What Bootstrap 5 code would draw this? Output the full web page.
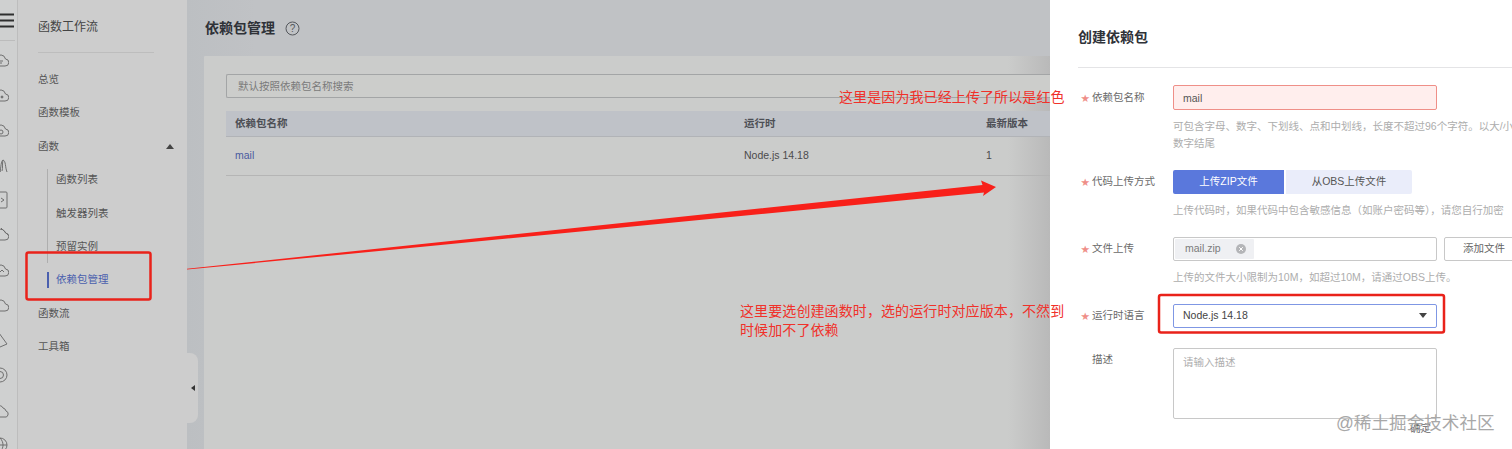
<!DOCTYPE html>
<html lang="zh">
<head>
<meta charset="utf-8">
<title>依赖包管理</title>
<link href="https://cdn.jsdelivr.net/npm/bootstrap@5.3.0/dist/css/bootstrap.min.css" rel="stylesheet">
<style>
html,body{height:449px;overflow:hidden;}
body{font-family:"Liberation Sans","Noto Sans CJK SC",sans-serif;font-size:10.5px;color:#555;background:#cdcdcd;}
.stage{width:1512px;height:449px;overflow:hidden;}
.rail{width:18px;flex:none;background:#cfd0d0;border-right:1px solid #bdbdbd;overflow:hidden;}
.rail-top{height:41px;border-bottom:1px solid #bcbcbc;margin-right:2px;padding-top:12px;}
.rail-icons{gap:15px;padding-top:9px;margin-left:-7px;}
.rail-icons svg{flex:none;display:block;}
.side{width:169px;flex:none;background:#cdcdcd;padding:0 0 0 20px;}
.side-title{height:53px;line-height:54px;width:116px;border-bottom:1px solid #bdbdbd;font-size:12px;color:#444;margin-bottom:10px;}
.side-item{height:33.4px;line-height:33.4px;color:#555;padding:0;width:140px;}
.side-tri{width:0;height:0;border-left:4px solid transparent;border-right:4px solid transparent;border-bottom:5px solid #444;margin-right:4px;}
.side-sub{margin-left:9px;padding-left:9px;position:relative;}
.side-sub::before{content:"";position:absolute;left:0;top:6px;height:94px;width:1px;background:#aeaeae;}
.side-active{color:#4a5fae;position:relative;}
.side-active::before{content:"";position:absolute;left:-9px;top:9px;bottom:9px;width:2px;background:#4a5fae;}
.main{width:863px;flex:none;background:linear-gradient(90deg,#bcbfc2,#c0c2c5 8%);padding-left:17px;overflow:hidden;}
.main-head{height:56px;gap:10px;padding-left:1px;}
.main-title{font-size:14px;font-weight:700;color:#2f3238;line-height:1;}
.main-card{height:393px;background:linear-gradient(90deg,#cbcccb 95%,#b9b9b9);padding:18px 0 0 22px;border-top-left-radius:1px;}
.search-box{height:24px;border:1px solid #a3a5a6;border-right:0;border-radius:2px 0 0 2px;background:#cccdcb;font-size:10.5px;padding:0 11px;color:#7a7a7a;}
.search-box::placeholder{color:#7a7a7a;}
.search-box:focus{background:#cccdcb;border-color:#a3a5a6;box-shadow:none;}
.dep-table{margin:13px 0 0;table-layout:fixed;width:900px;--bs-table-bg:transparent;--bs-table-color:#4b4b4b;font-size:10.5px;}
.dep-table th{height:25px;padding:2px 9px 0;background:#bfc2c8;font-weight:700;color:#4d4f55;border-bottom:1px solid #b1b3b7;vertical-align:middle;}
.dep-table td{height:39px;padding:1px 9px 0;border-bottom:1px solid #b5b5b5;vertical-align:middle;}
.dep-c1{width:509px;}.dep-c2{width:242px;}
.dep-link{color:#4a5a9f;text-decoration:none;}
.drawer{width:462px;flex:none;background:#fff;padding:0 0 0 28px;overflow:hidden;}
.drawer-title{height:68px;line-height:74px;font-size:14px;font-weight:700;color:#2f3238;border-bottom:1px solid #e4e4e6;margin-bottom:17px;}
.f-row{display:flex;width:460px;}
.f-label{width:95px;flex:none;color:#6a6a6a;position:relative;padding-left:14px;font-size:10.5px;}
.f-star{position:absolute;left:3px;top:50%;transform:translateY(-44%);color:#ef8f88;font-size:8.5px;}
.f-input{width:264px;height:25px;border-radius:2px;font-size:10.5px;color:#555;padding:0 9px;}
.f-err{background:#ffeeed;border:1px solid #ef8f88;}
.f-err:focus{background:#ffeeed;border-color:#ef8f88;box-shadow:none;color:#555;}
.f-help{margin-left:95px;font-size:10.5px;line-height:17px;color:#adadad;white-space:nowrap;margin-top:7.5px;}
.gap-row{margin-top:18.5px;}
.btn-up{width:111px;height:24px;padding:0;border:0;border-radius:2px 0 0 2px;background:#5a78dc;color:#fff;font-size:10.5px;}
.btn-up:hover{background:#5a78dc;color:#fff;}
.btn-obs{width:126px;height:24px;padding:0;margin-left:2px;border:0;border-radius:0 2px 2px 0;background:#eaedfa;color:#555;font-size:10.5px;}
.btn-obs:hover{background:#eaedfa;color:#555;}
.f-file{width:264px;height:24px;border:1px solid #c8c8c8;border-radius:2px;padding:1px;background:#fff;}
.f-chip{width:79px;height:20px;background:#eff0f3;border-radius:1px;padding:0 0 0 10px;color:#7b7b7b;gap:15px;}
.btn-add{width:90px;height:24px;margin-left:7px;padding:0;border:1px solid #c8c8c8;border-radius:2px;background:#fff;color:#666;font-size:10.5px;text-align:left;padding-left:18px;}
.f-select{width:264px;height:24px;border:1px solid #7f97e4;border-radius:2px;padding:0 9px;font-size:10.5px;color:#444;
 background-image:url("data:image/svg+xml,%3Csvg xmlns='http://www.w3.org/2000/svg' width='8' height='6'%3E%3Cpath d='M0 0h8L4 5z' fill='%23444'/%3E%3C/svg%3E");background-size:8px 6px;background-position:right 9px center;}
.f-select:focus{border-color:#7f97e4;box-shadow:none;}
.f-area{width:264px;height:71px;border:1px solid #c8c8c8;border-radius:2px;padding:6px 9px;font-size:10.5px;resize:none;}
.f-area::placeholder{color:#adadad;}
.f-area:focus{border-color:#c8c8c8;box-shadow:none;}
.collapse-tab{position:absolute;left:187px;top:353px;width:11px;height:70px;background:#cdcdcd;border-radius:0 8px 8px 0;}
.collapse-tri{width:0;height:0;border-top:3.5px solid transparent;border-bottom:3.5px solid transparent;border-right:4.5px solid #333;}
.anno-layer{position:absolute;left:0;top:0;pointer-events:none;}
.anno-text{position:absolute;font-size:14px;line-height:19px;color:#f0312a;white-space:nowrap;letter-spacing:.1px;}
.anno-a{left:839px;top:88px;}
.anno-b{left:740px;top:302px;}
.watermark{position:absolute;left:1336px;top:412px;font-size:17.6px;line-height:22px;color:#a8a8a8;white-space:nowrap;}
.ghost-btn{position:absolute;left:1410px;top:421px;font-size:10.5px;line-height:14px;color:#666;}
</style>
</head>
<body>
<div class="stage d-flex position-relative">
  <div class="rail">
    <div class="rail-top">
      <svg width="14" height="15" viewBox="0 0 14 15"><path d="M0 1.5h14M0 7.5h14M0 13.5h14" stroke="#2e2e2e" stroke-width="2"/></svg>
    </div>
    <div class="rail-icons d-flex flex-column">
      <svg width="16" height="20" viewBox="0 0 16 20" fill="none" stroke="#6f6f6f"><path d="M3 16h9a3.500 3.500 0 0 0 .5-7A5 5 0 0 0 3 8a4 4 0 0 0 0 8z"/><path d="M6 11h4M6 13h3"/></svg>
      <svg width="16" height="20" viewBox="0 0 16 20" fill="none" stroke="#6f6f6f"><path d="M3 16h9a3.500 3.500 0 0 0 .5-7A5 5 0 0 0 3 8a4 4 0 0 0 0 8z"/><circle cx="9" cy="12" r="1" fill="#6f6f6f"/></svg>
      <svg width="16" height="20" viewBox="0 0 16 20" fill="none" stroke="#6f6f6f"><path d="M3 16h9a3.500 3.500 0 0 0 .5-7A5 5 0 0 0 3 8a4 4 0 0 0 0 8z"/><circle cx="8" cy="12" r="2"/></svg>
      <svg width="16" height="20" viewBox="0 0 16 20" fill="none" stroke="#6f6f6f"><path d="M7 17c1-5 1-11 3-12 3 1 2 7 4 12M10 5c-1 4 0 8-1 11M7 17C6 13 6 9 5 7"/></svg>
      <svg width="16" height="20" viewBox="0 0 16 20" fill="none" stroke="#6f6f6f"><rect x="3" y="2" width="11" height="16" rx="1"/><path d="M8 8l3 2-3 2"/></svg>
      <svg width="16" height="20" viewBox="0 0 16 20" fill="none" stroke="#6f6f6f"><path d="M3 15h9a3.500 3.500 0 0 0 .5-7A5 5 0 0 0 5 5L2 8"/><path d="M8 3l7 7"/></svg>
      <svg width="16" height="20" viewBox="0 0 16 20" fill="none" stroke="#6f6f6f"><path d="M3 16h9a3.500 3.500 0 0 0 .5-7A5 5 0 0 0 3 8a4 4 0 0 0 0 8z"/><path d="M6 13l3-3 2 2"/></svg>
      <svg width="16" height="20" viewBox="0 0 16 20" fill="none" stroke="#6f6f6f"><path d="M3 16h9a3.500 3.500 0 0 0 .5-7A5 5 0 0 0 3 8a4 4 0 0 0 0 8z"/></svg>
      <svg width="16" height="20" viewBox="0 0 16 20" fill="none" stroke="#6f6f6f"><path d="M6 3l8 11-7 3-4-2z"/></svg>
      <svg width="16" height="20" viewBox="0 0 16 20" fill="none" stroke="#6f6f6f"><circle cx="7" cy="10" r="7"/><circle cx="7" cy="10" r="3.500"/></svg>
      <svg width="16" height="20" viewBox="0 0 16 20" fill="none" stroke="#6f6f6f"><path d="M4 17h7a3 3 0 0 0 2-6 4 4 0 0 0-3-3 3.500 3.500 0 0 0-6-1 4 4 0 0 0 0 10z"/></svg>
      <svg width="16" height="20" viewBox="0 0 16 20" fill="none" stroke="#6f6f6f"><circle cx="7" cy="10" r="7"/><path d="M0 10h14M7 3c-4 4-4 10 0 14M7 3c4 4 4 10 0 14"/></svg>
    </div>
  </div>

  <nav class="side">
    <div class="side-title">函数工作流</div>
    <div class="side-item">总览</div>
    <div class="side-item">函数模板</div>
    <div class="side-item d-flex align-items-center justify-content-between">函数<span class="side-tri"></span></div>
    <div class="side-sub">
      <div class="side-item">函数列表</div>
      <div class="side-item">触发器列表</div>
      <div class="side-item">预留实例</div>
      <div class="side-item side-active">依赖包管理</div>
    </div>
    <div class="side-item">函数流</div>
    <div class="side-item">工具箱</div>
  </nav>

  <main class="main">
    <div class="main-head d-flex align-items-center">
      <span class="main-title">依赖包管理</span>
      <svg width="15" height="15" viewBox="0 0 15 15"><circle cx="7.500" cy="7.500" r="6.500" fill="none" stroke="#55585d"/><text x="7.500" y="11" font-size="10" text-anchor="middle" fill="#55585d" font-family="Liberation Sans">?</text></svg>
    </div>
    <div class="main-card">
      <input class="form-control search-box" placeholder="默认按照依赖包名称搜索">
      <table class="table dep-table">
        <colgroup><col class="dep-c1"><col class="dep-c2"><col></colgroup>
        <thead><tr><th>依赖包名称</th><th>运行时</th><th>最新版本</th></tr></thead>
        <tbody><tr><td><a class="dep-link" href="#">mail</a></td><td>Node.js 14.18</td><td>1</td></tr></tbody>
      </table>
    </div>
  </main>

  <aside class="drawer">
    <div class="drawer-title">创建依赖包</div>
    <div class="f-row align-items-center">
      <label class="f-label"><span class="f-star">★</span>依赖包名称</label>
      <input class="form-control f-input f-err" value="mail">
    </div>
    <div class="f-help">可包含字母、数字、下划线、点和中划线&#xFF0C;长度不超过96个字符。以大/小<br>数字结尾</div>
    <div class="f-row align-items-center gap-row">
      <label class="f-label"><span class="f-star">★</span>代码上传方式</label>
      <div class="d-flex">
        <button class="btn btn-up">上传ZIP文件</button>
        <button class="btn btn-obs">从OBS上传文件</button>
      </div>
    </div>
    <div class="f-help">上传代码时&#xFF0C;如果代码中包含敏感信息&#xFF08;如账户密码等&#xFF09;&#xFF0C;请您自行加密</div>
    <div class="f-row align-items-center gap-row">
      <label class="f-label"><span class="f-star">★</span>文件上传</label>
      <div class="f-file d-flex">
        <span class="f-chip d-flex align-items-center">mail.zip
          <svg width="10" height="10" viewBox="0 0 10 10"><circle cx="5" cy="5" r="5" fill="#b4b5b8"/><path d="M3.200 3.200l3.600 3.600M6.800 3.200l-3.600 3.600" stroke="#fff"/></svg>
        </span>
      </div>
      <button class="btn btn-add">添加文件</button>
    </div>
    <div class="f-help">上传的文件大小限制为10M&#xFF0C;如超过10M&#xFF0C;请通过OBS上传。</div>
    <div class="f-row align-items-center gap-row">
      <label class="f-label"><span class="f-star">★</span>运行时语言</label>
      <select class="form-select f-select"><option>Node.js 14.18</option></select>
    </div>
    <div class="f-row mt-3 pt-1">
      <label class="f-label pt-1">描述</label>
      <textarea class="form-control f-area" placeholder="请输入描述"></textarea>
    </div>
  </aside>

  <div class="collapse-tab d-flex align-items-center justify-content-center"><span class="collapse-tri"></span></div>

  <svg class="anno-layer" width="1512" height="449" viewBox="0 0 1512 449">
    <rect x="26.500" y="252.500" width="124" height="47" rx="2" fill="none" stroke="#e9221a" stroke-width="2.500"/>
    <rect x="1159" y="295" width="285" height="37.500" rx="2" fill="none" stroke="#e9221a" stroke-width="2.500"/>
    <polygon points="187,268.700 982.500,185 981,180.500 996,187 983,196 984,192.500 187,269.600" fill="#f8201a"/>
  </svg>
  <div class="anno-text anno-a">这里是因为我已经上传了所以是红色</div>
  <div class="anno-text anno-b">这里要选创建函数时&#xFF0C;选的运行时对应版本&#xFF0C;不然到<br>时候加不了依赖</div>
  <div class="ghost-btn">确定</div>
  <div class="watermark">@稀土掘金技术社区</div>
</div>
<script src="https://cdn.jsdelivr.net/npm/bootstrap@5.3.0/dist/js/bootstrap.bundle.min.js"></script>
</body>
</html>
